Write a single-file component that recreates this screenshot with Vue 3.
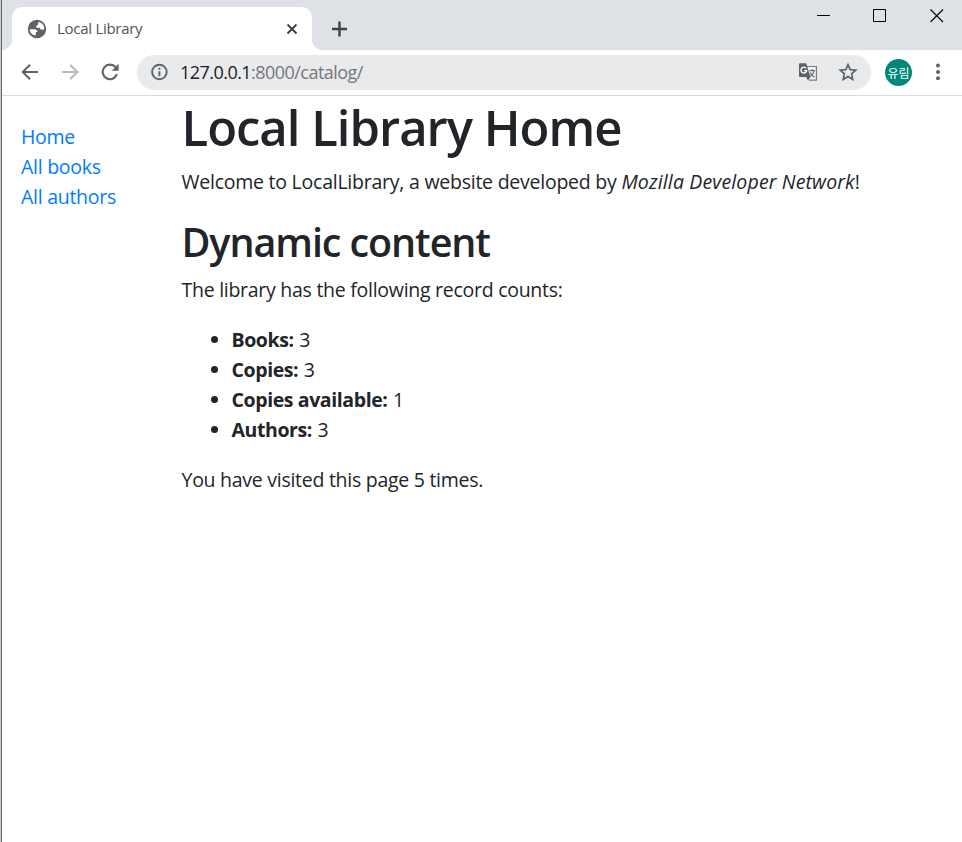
<script setup>
const links = ['Home', 'All books', 'All authors']
const counts = [
  { label: 'Books:', value: 3 },
  { label: 'Copies:', value: 3 },
  { label: 'Copies available:', value: 1 },
  { label: 'Authors:', value: 3 },
]
</script>

<template>
  <div class="window">
    <header class="tabstrip">
      <div class="tab">
        <svg class="globe" width="20" height="20" viewBox="0 0 20 20">
          <circle cx="10" cy="10" r="9.200" fill="#5f6368" />
          <path d="M2.700 10.300h4.500c2 0 3.300.9 3.300 2.600H8.800v3.600c-3.600-.3-6-2.900-6.100-6.200zM11.500 3.100c3.100.5 5.500 3.100 5.800 6.100-.4 1-1.200 1.500-2.200 1.500-1.300 0-2.200-.6-2.500-1.900H9.200c-.2-1.900.3-2.800 1.800-2.900 0-1 .1-1.900.5-2.800z" fill="#fff" />
        </svg>
        <span class="tab-title">Local Library</span>
        <svg class="tab-close" width="12" height="12" viewBox="0 0 12 12"><path d="M1.500 1.500l9 9M10.500 1.500l-9 9" stroke="#3c4043" stroke-width="1.900" /></svg>
      </div>
      <svg class="new-tab" width="16" height="16" viewBox="0 0 16 16"><path d="M8.500 .5v15M1 8h15" stroke="#3c4043" stroke-width="2.400" /></svg>
      <div class="controls">
        <svg width="14" height="14" viewBox="0 0 14 14"><path d="M1 6.500h13" stroke="#000" /></svg>
        <svg width="14" height="14" viewBox="0 0 14 14"><path d="M.5.500h12v12H.5z" fill="none" stroke="#000" /></svg>
        <svg width="14" height="14" viewBox="0 0 14 14"><path d="M.5.500l12.500 12.500M13 .5L.5 13" stroke="#000" stroke-width="1.100" /></svg>
      </div>
    </header>

    <div class="toolbar">
      <svg class="nav-icon" width="18" height="18" viewBox="0 0 18 18"><path d="M17 9H2.200M9 1.700L1.700 9 9 16.300" fill="none" stroke="#5f6368" stroke-width="2" /></svg>
      <svg class="nav-icon" width="18" height="18" viewBox="0 0 18 18"><path d="M1 9h14.800M9 1.700L16.300 9 9 16.300" fill="none" stroke="#bababa" stroke-width="2" /></svg>
      <svg class="nav-icon" width="18" height="18" viewBox="0 0 18 18"><path d="M15.900 11.200A7.300 7.300 0 1 1 14.500 4.100" fill="none" stroke="#5f6368" stroke-width="2.100" /><path d="M17.600.8v6.900h-6.900z" fill="#5f6368" /></svg>
      <div class="omnibox">
        <svg class="info" width="18" height="18" viewBox="0 0 18 18"><circle cx="9.400" cy="9" r="7.300" fill="none" stroke="#5f6368" stroke-width="1.900" /><path d="M9.400 8.200v5M9.400 4.700v2" stroke="#5f6368" stroke-width="1.900" /></svg>
        <span class="url"><span class="host">127.0.0.1</span>:8000/catalog/</span>
        <svg class="translate" width="20" height="20" viewBox="0 0 20 20">
          <path d="M8.500 4.500h9.900v13.700H11" fill="#f1f2f3" stroke="#777b7f" stroke-width="1.200" />
          <path d="M1.800 1.200h6.400l4.300 13.800H1.800Q1 15 1 14.200V2Q1 1.200 1.800 1.200zM8 15h4.500l-2.500 3.600z" fill="#5f6368" />
          <path d="M8.200 6.400A2.900 2.900 0 1 0 8.700 8.600H6.100" fill="none" stroke="#fff" stroke-width="1.300" />
          <path d="M11.300 8.700h5.600M14.100 7.300v1.400M16.100 8.800c-.5 2.400-1.800 4.300-3.500 5.400M12.300 10.400c.8 1.900 2.200 3.500 4.200 4.900" fill="none" stroke="#6b6f73" stroke-width="1.200" />
        </svg>
        <svg class="star" width="20" height="20" viewBox="0 0 20 20"><path d="M10 2.600l2.200 5.100 5.600.5-4.200 3.700 1.200 5.500-4.800-2.900-4.800 2.900 1.200-5.500-4.200-3.700 5.600-.5z" fill="none" stroke="#5f6368" stroke-width="1.700" /></svg>
      </div>
      <div class="avatar">유림</div>
      <svg class="menu" width="6" height="18" viewBox="0 0 6 18"><g fill="#5f6368"><circle cx="3" cy="2.600" r="2" /><circle cx="3" cy="9" r="2" /><circle cx="3" cy="15.300" r="2" /></g></svg>
    </div>

    <div class="page">
      <nav class="sidebar">
        <a v-for="link in links" :key="link">{{ link }}</a>
      </nav>
      <main class="content">
        <h1>Local Library Home</h1>
        <p class="welcome">Welcome to LocalLibrary, a website developed by <em>Mozilla Developer Network</em>!</p>
        <h2>Dynamic content</h2>
        <p>The library has the following record counts:</p>
        <ul>
          <li v-for="c in counts" :key="c.label"><strong>{{ c.label }}</strong> {{ c.value }}</li>
        </ul>
        <p>You have visited this page 5 times.</p>
      </main>
    </div>
  </div>
</template>

<style>
body { margin: 0; background: #fff; overflow: hidden; }
</style>

<style scoped>
.window {
  box-sizing: border-box;
  height: 842px;
  border-left: 1px solid #666;
  margin-left: 1px;
  box-shadow: -1px 0 #ccc;
  font-family: "Open Sans", "Noto Sans", "Noto Sans CJK KR", sans-serif;
  color: #212529;
  background: #fff;
}
svg { display: block; flex: none; }
.tabstrip {
  display: flex;
  height: 50px;
  background: #dee1e6;
}
.tab {
  position: relative;
  box-sizing: border-box;
  display: flex;
  align-items: center;
  width: 300px;
  height: 43px;
  margin: 7px 0 0 10px;
  padding: 0 14px 0 15px;
  background: #fff;
  border-radius: 10px 10px 0 0;
}
.tab::before, .tab::after {
  content: "";
  position: absolute;
  bottom: 0;
  width: 10px;
  height: 10px;
}
.tab::before { left: -10px; background: radial-gradient(circle at 0 0, transparent 9.5px, #fff 10.3px); }
.tab::after { right: -10px; background: radial-gradient(circle at 100% 0, transparent 9.5px, #fff 10.3px); }
.tab-title {
  flex: 1;
  margin: -2px 0 0 10px;
  font-size: 15px;
  letter-spacing: -0.28px;
  color: #505458;
  white-space: nowrap;
}
.new-tab { margin: 20.500px 0 0 19px; }
.controls { display: flex; gap: 43px; margin: 9px 18px 0 auto; }
.toolbar {
  box-sizing: border-box;
  display: flex;
  align-items: center;
  height: 46px;
  padding: 0 21px 1px 18.500px;
  border-bottom: 1px solid #d9dbde;
}
.nav-icon { margin-right: 22px; }
.omnibox {
  box-sizing: border-box;
  display: flex;
  align-items: center;
  width: 734px;
  height: 35px;
  margin-left: -3.500px;
  padding: 0 13px;
  border-radius: 18px;
  background: #e9eaec;
}
.url { flex: 1; margin-left: 12px; font-size: 18px; letter-spacing: -0.540px; color: #74787c; }
.host { color: #202124; }
.star { margin-left: 20px; }
.avatar {
  display: flex;
  align-items: center;
  justify-content: center;
  width: 27px;
  height: 27px;
  margin-left: 14px;
  border-radius: 50%;
  background: #00897b;
  color: #fff;
  font: 12px/27px "Noto Sans CJK KR", sans-serif;
  white-space: nowrap;
}
.menu { margin-left: auto; }
.page { display: flex; font-size: 19.500px; line-height: 30px; letter-spacing: -0.270px; }
.sidebar {
  display: flex;
  flex-direction: column;
  width: 160px;
  padding: 26px 0 0 19px;
  box-sizing: border-box;
  color: #007bff;
}
.content { padding: 1px 0 0 19.500px; white-space: nowrap; }
h1, h2 { margin: 0 0 10px; font-weight: 600; }
h1 { font-size: 49px; line-height: 60px; letter-spacing: -1px; }
h2 { font-size: 39.500px; line-height: 50px; height: 48px; letter-spacing: -1.080px; }
p { margin: 0 0 20px; }
.welcome { letter-spacing: -0.240px; }
em { letter-spacing: 0.140px; }
strong { letter-spacing: -0.400px; margin-right: 0.700px; font-weight: 700; }
ul { margin: 0 0 20px; padding-left: 50px; }
</style>
